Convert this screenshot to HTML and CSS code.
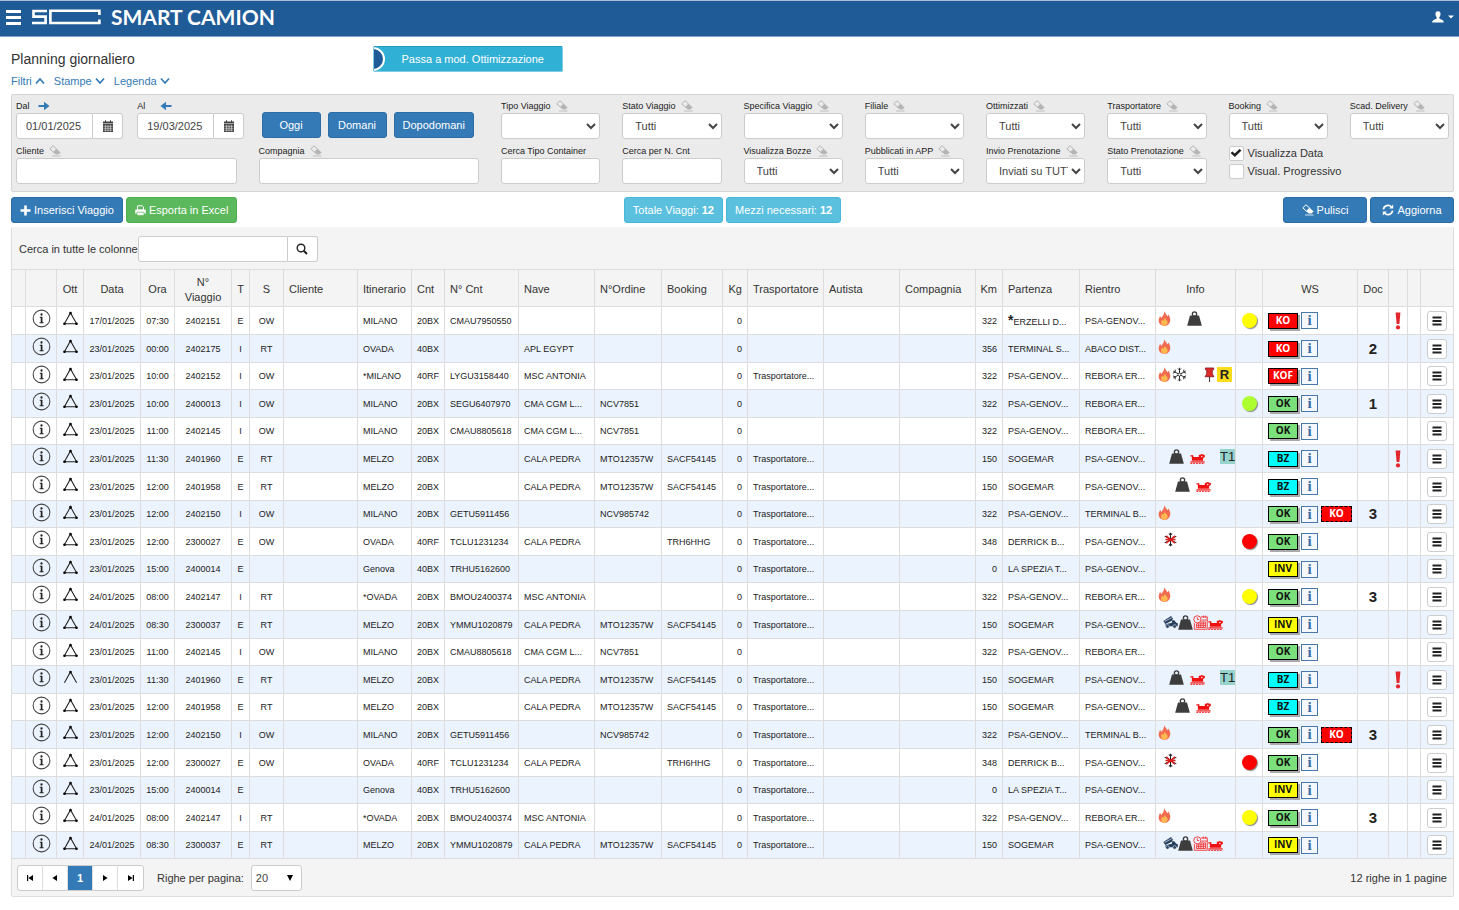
FILE: index.html
```html
<!DOCTYPE html>
<html lang="it">
<head>
    <meta charset="UTF-8">
    <meta name="viewport" content="width=device-width, initial-scale=1.0">
    <title>Smart Camion - Planning giornaliero</title>
    <link rel="stylesheet" href="styles.css">
</head>
<body>

<svg class="sprite" aria-hidden="true">
    <symbol id="i-eraser" viewBox="0 0 12 12">
        <path d="M4 0.8 7.8 4.2 4.4 7.2 0.8 3.8Z" fill="none" stroke="currentColor" stroke-width="1"/>
        <path d="M7.6 3.8 11.6 7.6 9.4 9.6H6.8L4.2 7.2Z" fill="currentColor"/>
        <path d="M3 11H11.6" stroke="currentColor" stroke-width=".8"/>
    </symbol>
    <symbol id="i-calendar" viewBox="0 0 12 12">
        <path d="M1 1.5H3V0.3H4V1.5H8V0.3H9V1.5H11V3.4H1Z" fill="currentColor"/>
        <path d="M1 4H11V12H1Z" fill="currentColor"/>
        <path d="M1.5 6.3H10.5M1.5 8.3H10.5M1.5 10.2H10.5M3.6 4.6V11.4M6 4.6V11.4M8.4 4.6V11.4" stroke="#fff" stroke-width=".5"/>
    </symbol>
    <symbol id="i-right" viewBox="0 0 12 10">
        <path d="M0.5 5H8" stroke="currentColor" stroke-width="2"/>
        <path d="M6 0.8 11.5 5 6 9.2Z" fill="currentColor"/>
    </symbol>
    <symbol id="i-up" viewBox="0 0 10 8">
        <path d="M1 6.5 5 2 9 6.5" fill="none" stroke="currentColor" stroke-width="1.7"/>
    </symbol>
    <symbol id="i-down" viewBox="0 0 10 8">
        <path d="M1 1.5 5 6 9 1.5" fill="none" stroke="currentColor" stroke-width="1.7"/>
    </symbol>
    <symbol id="i-info" viewBox="0 0 20 20">
        <circle cx="10" cy="10" r="8.8" fill="none" stroke="#444" stroke-width="1.1"/>
        <circle cx="10" cy="5.8" r="1.2" fill="#222"/>
        <path d="M8.2 8.2H11V14H12.2V14.9H8V14H9.2V9.1H8.2Z" fill="#222"/>
    </symbol>
    <symbol id="i-tri" viewBox="0 0 18 16">
        <path d="M9 2 2.5 13.6H15.5Z" fill="none" stroke="#222" stroke-width="1.1"/>
        <circle cx="9" cy="2.2" r="1.4"/><circle cx="2.6" cy="13.6" r="1.4"/><circle cx="15.4" cy="13.6" r="1.4"/>
    </symbol>
    <symbol id="i-open" viewBox="0 0 18 16">
        <path d="M2.5 13.6 9 2 15.5 13.6" fill="none" stroke="#222" stroke-width="1.1"/>
        <circle cx="9" cy="2.2" r="1.4"/>
    </symbol>
    <symbol id="i-fire" viewBox="0 0 16 16">
        <path d="M7.6 0.3C8.6 2.6 10.2 3.6 11 5.6 11.6 5.2 12 4.4 12 3.6 13.6 5.8 14.6 8 14 10.8 13.2 14 11 15.8 8 15.8 4.6 15.8 2 13.8 1.8 10.6 1.6 8.4 2.8 6.8 3.2 5.4 3.8 5.8 4.2 6.6 4.4 7.4 6.4 5.6 7.8 3 7.6 0.3Z" fill="#f26a50"/>
        <path d="M8 6.8C8.4 8.8 11.6 9.8 11.4 12.6 11.2 14.6 9.8 15.6 8 15.6 6 15.6 4.4 14.4 4.4 12.4 4.4 11 5 10.2 5.4 9.4 5.8 9.8 6 10.2 6.4 10.4 7 9.4 8 8.4 8 6.8Z" fill="#fdb94f"/>
    </symbol>
    <symbol id="i-weight" viewBox="0 0 16 16">
        <path d="M3.2 4.8H12.8L15.8 15.6H0.2Z" fill="#3d3d3d"/>
        <circle cx="8" cy="3.2" r="2.3" fill="none" stroke="#3d3d3d" stroke-width="1.4"/>
    </symbol>
    <symbol id="i-snow" viewBox="0 0 16 16">
        <path d="M8 0.8V15.2M1.4 4.4 14.6 11.6M14.6 4.4 1.4 11.6M6.4 1.6 8 3.2 9.6 1.6M6.4 14.4 8 12.8 9.6 14.4M1 6.6 3.4 5.4 3.4 2.8M15 9.4 12.6 10.6 12.6 13.2M15 6.6 12.6 5.4 12.6 2.8M1 9.4 3.4 10.6 3.4 13.2" fill="none" stroke="#222" stroke-width="1"/>
        <circle cx="8" cy="8" r="1.6" fill="#fff" stroke="#222" stroke-width=".8"/>
    </symbol>
    <symbol id="i-snowoff" viewBox="0 0 16 16">
        <path d="M8 0.8V15.2M1.8 4.4 14.2 11.6M14.2 4.4 1.8 11.6M6.2 1.6 8 3.4 9.8 1.6M6.2 14.4 8 12.6 9.8 14.4" fill="none" stroke="#222" stroke-width="1.1"/>
        <path d="M3.4 4.2 12.8 12M12.8 4.2 3.4 12M2.6 8H13.4" stroke="#e01b1b" stroke-width="1.6"/>
    </symbol>
    <symbol id="i-pin" viewBox="0 0 16 16">
        <path d="M8 9V16" stroke="#444" stroke-width="1.2"/>
        <path d="M3.6 1H12.4V3H11V7.4L12.8 10.4H3.2L5 7.4V3H3.6Z" fill="#dc2a2a" stroke="#7d1414" stroke-width=".8"/>
    </symbol>
    <symbol id="i-boat" viewBox="0 0 16 16">
        <path d="M0.4 6.6H3.6V8.6H9.4V6H11L12 5.2 15.8 6.4V8.6L14 9.6V12.4H2V8H0.4Z" fill="#f01010"/>
        <circle cx="12.6" cy="8" r=".8" fill="#fff"/>
        <path d="M0.4 13.8H15.6" stroke="#f01010" stroke-width="1.3"/>
        <path d="M0.4 15.5H15.6" stroke="#f01010" stroke-width=".9" stroke-dasharray="2 1"/>
    </symbol>
    <symbol id="i-truck" viewBox="0 0 16 16">
        <path d="M0.4 6.4 8.6 1 10.6 3.6 9.4 6.2 2.4 9.6Z" fill="#27405e"/>
        <path d="M1.8 6.8 9.4 2.8" stroke="#eaf2fd" stroke-width=".7"/>
        <path d="M2.6 9.8 9.6 8.2V5.6H12L14.2 8.2 15.8 8.8V12H2.6Z" fill="#27405e"/>
        <circle cx="4.8" cy="12.2" r="1.9" fill="#27405e" stroke="#eaf2fd" stroke-width=".6"/>
        <circle cx="12.4" cy="12.2" r="1.9" fill="#27405e" stroke="#eaf2fd" stroke-width=".6"/>
    </symbol>
    <symbol id="i-sched" viewBox="0 0 16 16">
        <g fill="none" stroke="#f23a3a" stroke-width="1">
            <path d="M8.4 2H15.2V15.2H1.4V8.6M8.8 5.4H15.2M11 0.6V3.2M13.6 0.6V3.2"/>
            <circle cx="4.6" cy="4.6" r="3.8"/>
            <path d="M4.6 2.4V4.8H6.6"/>
            <path d="M3.6 9.4H13.4V13.4H3.6ZM3.6 11.4H13.4M6 9.4V13.4M8.4 7.4V13.4M11 7.4V13.4M8.4 7.4H13.4V9.4"/>
        </g>
    </symbol>
    <symbol id="i-excl" viewBox="0 0 8 18">
        <path d="M1.6 0.6H6.4L5.4 12H2.6Z" fill="#e3262b"/>
        <circle cx="4" cy="15.4" r="2.1" fill="#e3262b"/>
    </symbol>
    <symbol id="i-menu" viewBox="0 0 10 10">
        <path d="M0.5 1.5H9.5M0.5 5H9.5M0.5 8.5H9.5" stroke="#222" stroke-width="1.9"/>
    </symbol>
</svg>

<header class="topbar">
    <button class="burger" aria-label="Menu"><span></span><span></span><span></span></button>
    <a class="brand" href="#">
        <svg width="69" height="16" viewBox="0 0 69 16" fill="none" stroke="#fff" stroke-width="2.6" aria-hidden="true">
            <path d="M15 2H1.5V7.6H13.6V14H0"/>
            <path d="M67.4 6V1.8H18.4V14H67.4V10.5"/>
        </svg>
        <span>SMART CAMION</span>
    </a>
    <button class="user" aria-label="Utente">
        <svg width="12" height="12" viewBox="0 0 12 12" fill="#fff"><path d="M6 0.3C8 0.3 8.8 1.8 8.5 3.8 8.3 5 7.8 5.6 7.3 6.2V7.6C8.6 8.6 11.6 8.8 11.8 11.4H0.2C0.4 8.8 3.4 8.6 4.7 7.6V6.2C4.2 5.6 3.7 5 3.5 3.8 3.2 1.8 4 0.3 6 0.3Z"/></svg>
        <svg width="6" height="4" viewBox="0 0 6 4" fill="#fff"><path d="M0 0.5H6L3 3.5Z"/></svg>
    </button>
</header>

<main class="page">
    <div class="heading">
        <h1>Planning giornaliero</h1>
        <button class="mode"><span class="knob"></span>Passa a mod. Ottimizzazione</button>
    </div>

    <nav class="toggles">
        <a href="#">Filtri <svg width="10" height="8"><use href="#i-up"/></svg></a>
        <a href="#">Stampe <svg width="10" height="8"><use href="#i-down"/></svg></a>
        <a href="#">Legenda <svg width="10" height="8"><use href="#i-down"/></svg></a>
    </nav>

    <form class="filters">
        <div class="field">
            <label for="dal">Dal <svg class="arrow" width="12" height="10"><use href="#i-right"/></svg></label>
            <div class="date"><input id="dal" type="text" value="01/01/2025"><button type="button" aria-label="Calendario"><svg width="12" height="12"><use href="#i-calendar"/></svg></button></div>
        </div>
        <div class="field">
            <label for="al">Al <svg class="arrow back" width="12" height="10"><use href="#i-right"/></svg></label>
            <div class="date"><input id="al" type="text" value="19/03/2025"><button type="button" aria-label="Calendario"><svg width="12" height="12"><use href="#i-calendar"/></svg></button></div>
        </div>
        <div class="days">
            <button type="button" class="btn blue">Oggi</button>
            <button type="button" class="btn blue">Domani</button>
            <button type="button" class="btn blue">Dopodomani</button>
        </div>
        <div class="field">
            <label for="tipo">Tipo Viaggio <svg><use href="#i-eraser"/></svg></label>
            <select id="tipo"><option></option></select>
        </div>
        <div class="field">
            <label for="stato">Stato Viaggio <svg><use href="#i-eraser"/></svg></label>
            <select id="stato"><option>Tutti</option></select>
        </div>
        <div class="field">
            <label for="specifica">Specifica Viaggio <svg><use href="#i-eraser"/></svg></label>
            <select id="specifica"><option></option></select>
        </div>
        <div class="field">
            <label for="filiale">Filiale <svg><use href="#i-eraser"/></svg></label>
            <select id="filiale"><option></option></select>
        </div>
        <div class="field">
            <label for="ottimizzati">Ottimizzati <svg><use href="#i-eraser"/></svg></label>
            <select id="ottimizzati"><option>Tutti</option></select>
        </div>
        <div class="field">
            <label for="trasportatore">Trasportatore <svg><use href="#i-eraser"/></svg></label>
            <select id="trasportatore"><option>Tutti</option></select>
        </div>
        <div class="field">
            <label for="booking">Booking <svg><use href="#i-eraser"/></svg></label>
            <select id="booking"><option>Tutti</option></select>
        </div>
        <div class="field">
            <label for="delivery">Scad. Delivery <svg><use href="#i-eraser"/></svg></label>
            <select id="delivery"><option>Tutti</option></select>
        </div>

        <div class="field wide">
            <label for="cliente">Cliente <svg><use href="#i-eraser"/></svg></label>
            <input id="cliente" type="text">
        </div>
        <div class="field wide">
            <label for="compagnia">Compagnia <svg><use href="#i-eraser"/></svg></label>
            <input id="compagnia" type="text">
        </div>
        <div class="field">
            <label for="container">Cerca Tipo Container</label>
            <input id="container" type="text">
        </div>
        <div class="field">
            <label for="ncnt">Cerca per N. Cnt</label>
            <input id="ncnt" type="text">
        </div>
        <div class="field">
            <label for="bozze">Visualizza Bozze <svg><use href="#i-eraser"/></svg></label>
            <select id="bozze"><option>Tutti</option></select>
        </div>
        <div class="field">
            <label for="app">Pubblicati in APP <svg><use href="#i-eraser"/></svg></label>
            <select id="app"><option>Tutti</option></select>
        </div>
        <div class="field">
            <label for="invio">Invio Prenotazione <svg><use href="#i-eraser"/></svg></label>
            <select id="invio"><option>Inviati su TUTTI</option></select>
        </div>
        <div class="field">
            <label for="prenotazione">Stato Prenotazione <svg><use href="#i-eraser"/></svg></label>
            <select id="prenotazione"><option>Tutti</option></select>
        </div>
        <div class="checks">
            <label><input type="checkbox" checked>Visualizza Data</label>
            <label><input type="checkbox">Visual. Progressivo</label>
        </div>
    </form>

    <div class="actions">
        <div class="group">
            <button class="btn blue"><svg width="11" height="11" viewBox="0 0 11 11"><path d="M5.5 0.5V10.5M0.5 5.5H10.5" stroke="#fff" stroke-width="2.6"/></svg>Inserisci Viaggio</button>
            <button class="btn green"><svg width="11" height="11" viewBox="0 0 11 11"><path d="M2.5 0.8H7.2L8.5 2V5H2.5Z" fill="none" stroke="#fff"/><path d="M0.2 4.6H10.8V8.6H0.2Z" fill="#fff"/><path d="M2 7.2H9V10.4H2Z" fill="#fff" stroke="#5cb85c" stroke-width=".7"/></svg>Esporta in Excel</button>
        </div>
        <div class="group">
            <button class="btn cyan">Totale Viaggi: <b>12</b></button>
            <button class="btn cyan">Mezzi necessari: <b>12</b></button>
        </div>
        <div class="group end">
            <button class="btn blue big"><svg width="12" height="12"><use href="#i-eraser"/></svg>Pulisci</button>
            <button class="btn blue big"><svg width="12" height="12" viewBox="0 0 12 12" fill="none" stroke="#fff" stroke-width="1.7"><path d="M1.4 5.4A4.6 4.6 0 0 1 9.4 3M10.6 6.6A4.6 4.6 0 0 1 2.6 9"/><path d="M11.2 0.6V4.6H7.2ZM0.8 11.4V7.4H4.8Z" fill="#fff" stroke="none"/></svg>Aggiorna</button>
        </div>
    </div>

    <section class="grid">
        <div class="search">
            <label for="cerca">Cerca in tutte le colonne</label>
            <input id="cerca" type="text"><button aria-label="Cerca"><svg width="12" height="12" viewBox="0 0 12 12" fill="none" stroke="#222"><circle cx="5" cy="5" r="3.8" stroke-width="1.4"/><path d="M7.8 7.8 11 11" stroke-width="2"/></svg></button>
        </div>

        <table>
            <colgroup>
                <col class="w14"><col class="w31"><col class="w27"><col class="w57"><col class="w34">
                <col class="w57"><col class="w18"><col class="w34"><col class="w74"><col class="w54">
                <col class="w33"><col class="w74"><col class="w76"><col class="w67"><col class="w61">
                <col class="w25"><col class="w76"><col><col><col class="w27">
                <col class="w77"><col class="w76"><col class="w80"><col class="w27"><col class="w95">
                <col class="w31"><col class="w19"><col class="w13"><col class="w32">
            </colgroup>
            <thead>
                <tr>
                    <th></th><th></th><th class="mid">Ott</th><th class="mid">Data</th><th class="mid">Ora</th>
                    <th class="mid">N°<br>Viaggio</th><th class="mid">T</th><th class="mid">S</th><th>Cliente</th><th>Itinerario</th>
                    <th>Cnt</th><th>N° Cnt</th><th>Nave</th><th>N°Ordine</th><th>Booking</th>
                    <th class="num">Kg</th><th>Trasportatore</th><th>Autista</th><th>Compagnia</th><th class="num">Km</th>
                    <th>Partenza</th><th>Rientro</th><th class="mid">Info</th><th></th><th class="mid">WS</th>
                    <th class="mid">Doc</th><th></th><th></th><th></th>
                </tr>
            </thead>
            <tbody id="rows"></tbody>
        </table>

        <div class="footer">
            <div class="pager">
                <button aria-label="Prima"><svg width="8" height="8" viewBox="0 0 8 8"><path d="M1 1H2.2V7H1ZM7 1V7L2.4 4Z"/></svg></button>
                <button aria-label="Precedente"><svg width="8" height="8" viewBox="0 0 8 8"><path d="M6 1V7L1.4 4Z"/></svg></button>
                <button class="current">1</button>
                <button aria-label="Successiva"><svg width="8" height="8" viewBox="0 0 8 8"><path d="M2 1V7L6.6 4Z"/></svg></button>
                <button aria-label="Ultima"><svg width="8" height="8" viewBox="0 0 8 8"><path d="M7 1H5.8V7H7ZM1 1V7L5.6 4Z"/></svg></button>
            </div>
            <label for="righe">Righe per pagina:</label>
            <div class="size">
                <select id="righe"><option>20</option></select>
                <svg width="6" height="8" viewBox="0 0 6 8"><path d="M0 1H6L3 7Z"/></svg>
            </div>
            <span class="total">12 righe in 1 pagine</span>
        </div>
    </section>
</main>

<script src="script.js"></script>
</body>
</html>
```
FILE: styles.css
```css
* {
    box-sizing: border-box;
}

body {
    margin: 0;
    font-family: "Liberation Sans", Arial, sans-serif;
    font-size: 11px;
    color: #333;
    background-color: #fff;
}

button, input, select {
    font-family: inherit;
    font-size: 11px;
    color: #444;
}

button {
    padding: 0;
    cursor: pointer;
}

a {
    color: #337ab7;
    text-decoration: none;
}

.sprite {
    display: none;
}

/* top bar */

.topbar {
    display: flex;
    align-items: center;
    height: 37px;
    padding: 0 5px 3px 6px;
    background-color: #1f5b97;
    border-top: 1px solid #a9bfd6;
    border-bottom: 1px solid #7fa3c7;
}

.burger {
    display: flex;
    flex-direction: column;
    gap: 3px;
    width: 15px;
    background: none;
    border: none;
}

.burger span {
    height: 3px;
    background-color: #fff;
}

.brand {
    display: flex;
    align-items: center;
    gap: 10px;
    margin-left: 11px;
    font-family: Lato, sans-serif;
    font-size: 21px;
    font-weight: bold;
    line-height: 24px;
    color: #fff;
}

.user {
    display: flex;
    align-items: center;
    gap: 4px;
    margin-left: auto;
    background: none;
    border: none;
}

/* heading */

.page {
    padding: 9px 5px 13px 11px;
}

.heading {
    display: grid;
    grid-template-columns: 1fr 3fr;
    align-items: center;
}

h1 {
    margin: 0;
    font-size: 14px;
    font-weight: normal;
}

.mode {
    position: relative;
    overflow: hidden;
    width: 190px;
    height: 26px;
    margin-left: 1px;
    padding-left: 10px;
    color: #fff;
    background-color: #31b0d5;
    border: 1px solid #7fcbe2;
    border-top-color: #269abc;
    border-radius: 2px;
}

.knob {
    position: absolute;
    top: 0;
    left: -13px;
    width: 24px;
    height: 24px;
    background-color: #1f5b97;
    border: 2px solid #fff;
    border-radius: 50%;
}

.toggles {
    display: flex;
    gap: 9px;
    height: 18px;
    margin: 0 0 4px;
    line-height: 18px;
}

/* filters */

.filters {
    display: grid;
    grid-template-columns: repeat(12, minmax(0, 1fr));
    gap: 5px 22px;
    padding: 4px 4px 7px;
    background-color: #ebebeb;
    border: 1px solid #d5d5d5;
    border-radius: 2px;
}

.field label {
    display: flex;
    align-items: center;
    gap: 5px;
    height: 14px;
    font-size: 9px;
    white-space: nowrap;
    color: #222;
}

.field label svg {
    width: 12px;
    height: 12px;
    color: #b5b5b5;
}

.field label .arrow {
    height: 10px;
    margin-left: 3px;
    color: #337ab7;
}

.field label .back {
    margin-left: 10px;
    transform: rotate(180deg);
}

.wide, .days {
    grid-column: span 2;
}

.field input, .field select {
    width: 100%;
    height: 26px;
    background-color: #fff;
    border: 1px solid #ccc;
    border-radius: 3px;
}

.field select {
    padding: 0 0 0 8px;
}

.date {
    display: flex;
    width: 107px;
}

.field .date input {
    width: 77px;
    padding: 0 0 0 9px;
    border-radius: 3px 0 0 3px;
}

.date button {
    display: flex;
    align-items: center;
    justify-content: center;
    flex: 1;
    background-color: #fff;
    border: 1px solid #ccc;
    border-left: none;
    border-radius: 0 3px 3px 0;
}

.days {
    display: flex;
    align-items: flex-end;
    gap: 7px;
    padding: 0 0 1px 3px;
    white-space: nowrap;
}

.days .btn {
    min-width: 59px;
}

.checks {
    grid-column: span 2;
    display: flex;
    flex-direction: column;
    gap: 2px;
    padding-top: 1px;
}

.checks label {
    display: flex;
    align-items: center;
    gap: 4px;
    height: 16px;
}

.checks input {
    appearance: none;
    display: grid;
    place-items: center;
    width: 15px;
    height: 15px;
    margin: 0;
    background-color: #fff;
    border: 1px solid #ccc;
    border-radius: 2px;
}

.checks input:checked::before {
    content: "";
    width: 11px;
    height: 8px;
    background-color: #222;
    clip-path: polygon(0 50%, 18% 32%, 38% 55%, 82% 0, 100% 18%, 40% 100%);
}

/* buttons */

.btn {
    display: flex;
    align-items: center;
    justify-content: center;
    gap: 3px;
    height: 26px;
    padding: 0 8px;
    color: #fff;
    border: 1px solid;
    border-radius: 3px;
    white-space: nowrap;
}

.blue {
    background-color: #337ab7;
    border-color: #2e6da4;
}

.green {
    background-color: #5cb85c;
    border-color: #4cae4c;
}

.cyan {
    background-color: #5bc0de;
    border-color: #46b8da;
}

.big {
    width: 84px;
}

.actions {
    display: grid;
    grid-template-columns: 1fr auto 1fr;
    margin: 5px 0 4px;
}

.group {
    display: flex;
    gap: 3px;
}

.end {
    justify-content: flex-end;
}

/* grid */

.grid {
    background-color: #f4f4f4;
    border: 1px solid #ddd;
    border-top-color: #f4f4f4;
    border-radius: 2px;
}

.search {
    display: flex;
    align-items: center;
    height: 41px;
    padding-left: 7px;
}

.search input {
    width: 150px;
    height: 26px;
    border: 1px solid #ccc;
    border-radius: 3px 0 0 3px;
}

.search button {
    display: flex;
    align-items: center;
    justify-content: center;
    width: 30px;
    height: 26px;
    background-color: #fff;
    border: 1px solid #ccc;
    border-left: none;
    border-radius: 0 3px 3px 0;
}

table {
    width: 100%;
    table-layout: fixed;
    border-collapse: separate;
    border-spacing: 0;
    border-top: 1px solid #ddd;
}

.w13 { width: 13px; }
.w14 { width: 14px; }
.w18 { width: 18px; }
.w19 { width: 19px; }
.w25 { width: 25px; }
.w27 { width: 27px; }
.w31 { width: 31px; }
.w32 { width: 32px; }
.w33 { width: 33px; }
.w34 { width: 34px; }
.w54 { width: 54px; }
.w57 { width: 57px; }
.w61 { width: 61px; }
.w67 { width: 67px; }
.w74 { width: 74px; }
.w76 { width: 76px; }
.w77 { width: 77px; }
.w80 { width: 80px; }
.w95 { width: 95px; }

th, td {
    padding: 0 0 0 5px;
    text-align: left;
    white-space: nowrap;
    border-right: 1px solid #ddd;
    border-bottom: 1px solid #ddd;
}

th:last-child, td:last-child {
    border-right: none;
}

th {
    height: 37px;
    padding-top: 3px;
    font-weight: normal;
    line-height: 15px;
}

td {
    font-size: 9px;
    line-height: 12px;
    color: #222;
}

tbody tr {
    height: 28px;
    background-color: #fff;
}

tbody tr:nth-child(5n), tbody tr:nth-child(5n+3) {
    height: 27px;
}

tbody tr:nth-child(even) {
    background-color: #ebf3fe;
}

.mid {
    padding-left: 0;
    text-align: center;
}

.num {
    padding-left: 0;
    padding-right: 5px;
    text-align: right;
}

td svg {
    display: block;
    margin: 0 auto;
}

.pic {
    padding: 0 0 4px;
}

.star {
    font-size: 14px;
    font-weight: bold;
}

.icons {
    display: flex;
    align-items: center;
    padding-left: 1px;
}

.icons svg, .tag {
    width: 15px;
    height: 15px;
    margin: 0;
}

.half {
    width: 6px;
}

.full {
    width: 15px;
}

.tag {
    font-size: 13px;
    line-height: 15px;
    text-align: center;
}

.tag-r {
    font-weight: bold;
    background-color: #fddc1c;
}

.tag-t {
    background-color: #97d3cd;
}

.dot {
    width: 15px;
    height: 15px;
    margin: 0 auto;
    border-radius: 50%;
    box-shadow: 1px 1px 1px #888;
}

.dot-yellow { background-color: #ff0; }
.dot-green { background-color: #adff2f; }
.dot-red { background-color: #f00; }

.ws {
    display: flex;
    align-items: center;
    gap: 3px;
}

.state {
    width: 30px;
    height: 16px;
    font-family: "Open Sans", sans-serif;
    font-size: 10px;
    font-weight: bold;
    line-height: 13px;
    text-align: center;
    color: #111;
    border: 1px solid #000;
    box-shadow: 2px 2px 0 #aaa;
}

.state.ko { color: #fff; background-color: #f00; }
.ok { background-color: #7bdf7b; }
.bz { background-color: #0ff; }
.inv { background-color: #ff0; }

.dashed {
    width: 31px;
    border-style: dashed;
    box-shadow: none;
}

.det {
    width: 17px;
    height: 17px;
    font-family: "Liberation Serif", serif;
    font-size: 15px;
    font-weight: bold;
    line-height: 15px;
    color: #3b6ca3;
    background-color: #f4f8fd;
    border: 1px solid #4a78ab;
}

.doc {
    font-size: 15px;
    font-weight: bold;
}

.rowmenu {
    display: flex;
    align-items: center;
    width: 20px;
    height: 20px;
    margin: 0 auto;
    background-color: #fff;
    border: 1px solid #ccc;
    border-radius: 3px;
}

/* footer */

.footer {
    display: flex;
    align-items: center;
    height: 37px;
    padding: 0 6px 0 5px;
}

.pager {
    display: flex;
    height: 26px;
    background-color: #fff;
    border: 1px solid #ccc;
    border-radius: 3px;
}

.pager button {
    width: 25px;
    background: none;
    border: none;
    border-right: 1px solid #ddd;
}

.pager button:last-child {
    border-right: none;
}

.pager .current {
    font-weight: bold;
    color: #fff;
    background-color: #337ab7;
}

.footer label {
    margin: 0 7px 0 13px;
}

.size {
    position: relative;
}

.size select {
    appearance: none;
    width: 51px;
    height: 26px;
    padding: 0 0 0 4px;
    background-color: #fff;
    border: 1px solid #ccc;
    border-radius: 3px;
}

.size svg {
    position: absolute;
    top: 9px;
    right: 9px;
    pointer-events: none;
}

.total {
    margin-left: auto;
}
```
FILE: script.js
```js
const trips = [
    { date: '17/01/2025', time: '07:30', n: '2402151', t: 'E', s: 'OW', route: 'MILANO', cnt: '20BX', ncnt: 'CMAU7950550', km: 322, from: '*ERZELLI D...', to: 'PSA-GENOV...', info: 'fire _ weight', dot: 'yellow', ws: 'KO', alert: true },
    { date: '23/01/2025', time: '00:00', n: '2402175', t: 'I', s: 'RT', route: 'OVADA', cnt: '40BX', ship: 'APL EGYPT', km: 356, from: 'TERMINAL S...', to: 'ABACO DIST...', info: 'fire', ws: 'KO', doc: 2 },
    { date: '23/01/2025', time: '10:00', n: '2402152', t: 'I', s: 'OW', route: '*MILANO', cnt: '40RF', ncnt: 'LYGU3158440', ship: 'MSC ANTONIA', carrier: 'Trasportatore...', km: 322, from: 'PSA-GENOV...', to: 'REBORA ER...', info: 'fire snow _ pin R', ws: 'KOF' },
    { date: '23/01/2025', time: '10:00', n: '2400013', t: 'I', s: 'OW', route: 'MILANO', cnt: '20BX', ncnt: 'SEGU6407970', ship: 'CMA CGM L...', order: 'NCV7851', km: 322, from: 'PSA-GENOV...', to: 'REBORA ER...', dot: 'green', ws: 'OK', doc: 1 },
    { date: '23/01/2025', time: '11:00', n: '2402145', t: 'I', s: 'OW', route: 'MILANO', cnt: '20BX', ncnt: 'CMAU8805618', ship: 'CMA CGM L...', order: 'NCV7851', km: 322, from: 'PSA-GENOV...', to: 'REBORA ER...', ws: 'OK' },
    { date: '23/01/2025', time: '11:30', n: '2401960', t: 'E', s: 'RT', route: 'MELZO', cnt: '20BX', ship: 'CALA PEDRA', order: 'MTO12357W', booking: 'SACF54145', carrier: 'Trasportatore...', km: 150, from: 'SOGEMAR', to: 'PSA-GENOV...', info: '. . weight . boat _ T1', ws: 'BZ', alert: true },
    { date: '23/01/2025', time: '12:00', n: '2401958', t: 'E', s: 'RT', route: 'MELZO', cnt: '20BX', ship: 'CALA PEDRA', order: 'MTO12357W', booking: 'SACF54145', carrier: 'Trasportatore...', km: 150, from: 'SOGEMAR', to: 'PSA-GENOV...', info: '. . . weight . boat', ws: 'BZ' },
    { date: '23/01/2025', time: '12:00', n: '2402150', t: 'I', s: 'OW', route: 'MILANO', cnt: '20BX', ncnt: 'GETU5911456', order: 'NCV985742', carrier: 'Trasportatore...', km: 322, from: 'PSA-GENOV...', to: 'TERMINAL B...', info: 'fire', ws: 'OK', ws2: 'KO', doc: 3 },
    { date: '23/01/2025', time: '12:00', n: '2300027', t: 'E', s: 'OW', route: 'OVADA', cnt: '40RF', ncnt: 'TCLU1231234', ship: 'CALA PEDRA', booking: 'TRH6HHG', carrier: 'Trasportatore...', km: 348, from: 'DERRICK B...', to: 'PSA-GENOV...', info: '. snowoff', dot: 'red', ws: 'OK' },
    { date: '23/01/2025', time: '15:00', n: '2400014', t: 'E', route: 'Genova', cnt: '40BX', ncnt: 'TRHU5162600', carrier: 'Trasportatore...', km: 0, from: 'LA SPEZIA T...', to: 'PSA-GENOV...', ws: 'INV' },
    { date: '24/01/2025', time: '08:00', n: '2402147', t: 'I', s: 'RT', route: '*OVADA', cnt: '20BX', ncnt: 'BMOU2400374', ship: 'MSC ANTONIA', carrier: 'Trasportatore...', km: 322, from: 'PSA-GENOV...', to: 'REBORA ER...', info: 'fire', dot: 'yellow', ws: 'OK', doc: 3 },
    { date: '24/01/2025', time: '08:30', n: '2300037', t: 'E', s: 'RT', route: 'MELZO', cnt: '20BX', ncnt: 'YMMU1020879', ship: 'CALA PEDRA', order: 'MTO12357W', booking: 'SACF54145', carrier: 'Trasportatore...', km: 150, from: 'SOGEMAR', to: 'PSA-GENOV...', info: '. truck weight sched boat', ws: 'INV' }
];

// second block of the page: same trips from 2402145 on
const rows = trips.concat(trips.slice(4).map(trip => ({ ...trip })));
rows[13].open = true;

const stateClass = { KO: 'ko', KOF: 'ko', OK: 'ok', BZ: 'bz', INV: 'inv' };

function icon(name, w, h) {
    return `<svg width="${w}" height="${h}"><use href="#i-${name}"/></svg>`;
}

function infoIcon(name) {
    if (name === '.') return '<span class="half"></span>';
    if (name === '_') return '<span class="full"></span>';
    if (name === 'R') return '<span class="tag tag-r">R</span>';
    if (name === 'T1') return '<span class="tag tag-t">T1</span>';
    return icon(name, 15, 15);
}

function state(text, extra = '') {
    return `<span class="state ${stateClass[text]} ${extra}">${text}</span>`;
}

function departure(text) {
    return text.startsWith('*') ? `<span class="star">*</span>${text.slice(1)}` : text;
}

function rowHtml(r) {
    return `<tr>
        <td></td>
        <td class="mid pic">${icon('info', 19, 19)}</td>
        <td class="mid pic">${icon(r.open ? 'open' : 'tri', 17, 15)}</td>
        <td class="mid">${r.date}</td>
        <td class="mid">${r.time}</td>
        <td class="mid">${r.n}</td>
        <td class="mid">${r.t}</td>
        <td class="mid">${r.s || ''}</td>
        <td></td>
        <td>${r.route}</td>
        <td>${r.cnt}</td>
        <td>${r.ncnt || ''}</td>
        <td>${r.ship || ''}</td>
        <td>${r.order || ''}</td>
        <td>${r.booking || ''}</td>
        <td class="num">0</td>
        <td>${r.carrier || ''}</td>
        <td></td>
        <td></td>
        <td class="num">${r.km}</td>
        <td>${departure(r.from)}</td>
        <td>${r.to}</td>
        <td class="pic"><div class="icons">${r.info ? r.info.split(' ').map(infoIcon).join('') : ''}</div></td>
        <td class="mid">${r.dot ? `<div class="dot dot-${r.dot}"></div>` : ''}</td>
        <td><div class="ws">${state(r.ws)}<button class="det" aria-label="Dettaglio">i</button>${r.ws2 ? state(r.ws2, 'dashed') : ''}</div></td>
        <td class="mid doc">${r.doc || ''}</td>
        <td class="mid">${r.alert ? icon('excl', 8, 18) : ''}</td>
        <td></td>
        <td class="mid"><button class="rowmenu" aria-label="Azioni">${icon('menu', 10, 10)}</button></td>
    </tr>`;
}

document.getElementById('rows').innerHTML = rows.map(rowHtml).join('');
```
